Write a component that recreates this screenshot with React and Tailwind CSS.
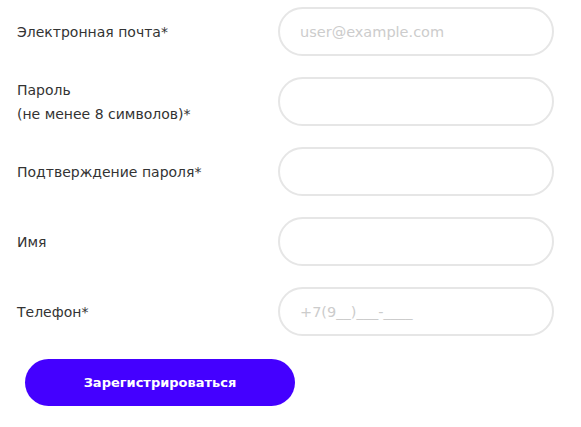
export default function App() {
  const fields = [
    { label: ["Электронная почта*"], placeholder: "user@example.com", type: "email" },
    { label: ["Пароль", "(не менее 8 символов)*"], placeholder: "", type: "password" },
    { label: ["Подтверждение пароля*"], placeholder: "", type: "password" },
    { label: ["Имя"], placeholder: "", type: "text" },
    { label: ["Телефон*"], placeholder: "+7(9__)___-____", type: "tel" },
  ];

  return (
    <div className="min-h-screen bg-white pl-[17px] pt-[7px] font-['DejaVu_Sans',sans-serif] text-[#333]">
      <form className="flex flex-col gap-[21px]">
        {fields.map((f, i) => (
          <div className="flex items-center" key={i}>
            <label className="w-[261px] text-[14px] leading-[24px]">
              {f.label.map((l, j) => (
                <div key={j}>{l}</div>
              ))}
            </label>
            <input
              type={f.type}
              placeholder={f.placeholder}
              className="h-[49px] w-[276px] rounded-full border-2 border-[#e6e6e6] px-[20px] text-[14.5px] outline-none placeholder:text-[#cccccc]"
            />
          </div>
        ))}
      </form>
      <button className="mt-[23px] ml-[8px] h-[47px] w-[270px] rounded-full bg-[#4400ff] text-[13px] font-bold text-white">
        Зарегистрироваться
      </button>
    </div>
  );
}
